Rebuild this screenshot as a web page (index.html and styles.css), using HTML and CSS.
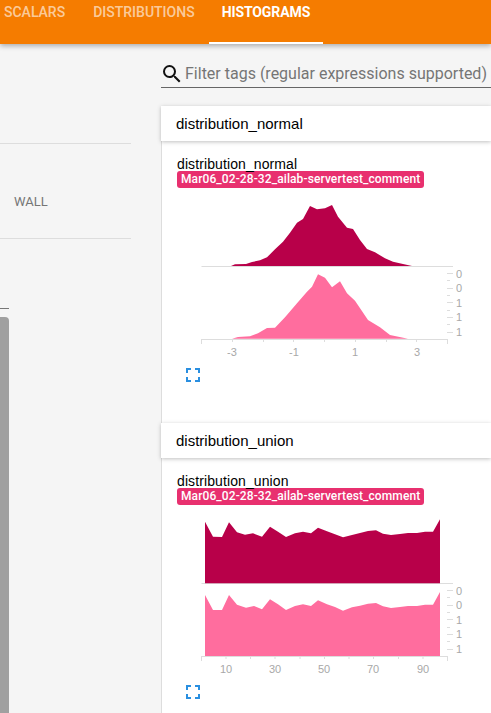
FILE: index.html
```html
<!DOCTYPE html>
<html lang="en">
<head>
  <meta charset="UTF-8" />
  <title>TensorBoard</title>
  <link rel="stylesheet" href="styles.css">
</head>
<body>
<header class="topbar">
  <a class="tab">SCALARS</a>
  <a class="tab">DISTRIBUTIONS</a>
  <a class="tab active">HISTOGRAMS</a>
</header>

<div class="layout">
  <aside class="sidebar">
    <div class="xtype">WALL</div>
    <div class="runs-rule"></div>
    <div class="runs-thumb"></div>
  </aside>

  <main class="content">
    <div class="search">
      <svg class="search-icon" viewBox="0 0 24 24">
        <path d="M15.5 14h-.79l-.28-.27A6.47 6.47 0 0 0 16 9.5 6.5 6.5 0 1 0 9.5 16c1.61 0 3.09-.59 4.23-1.57l.27.28v.79l5 4.99L20.49 19l-4.99-5zm-6 0C7.01 14 5 11.99 5 9.5S7.01 5 9.5 5 14 7.01 14 9.5 11.99 14 9.5 14z"/>
      </svg>
      <span class="search-text">Filter tags (regular expressions supported)</span>
    </div>

    <section class="pane">
      <h2 class="pane-title">distribution_normal</h2>
      <div class="card">
        <div class="card-name">distribution_normal</div>
        <span class="run-tag">Mar06_02-28-32_ailab-servertest_comment</span>
        <svg class="chart" viewBox="190 195 300 170">
          <g class="baseline">
            <path d="M201.5 266.5H453"/>
            <path d="M201.5 339.5H447.5V342"/>
          </g>
          <polygon class="area-dark" points="231,266 235,264.3 246,264 252,262 260,260.3 267,257.3 275,249.3 283,241.7 290,232.7 297,222.7 303,219 310,206 317,209.3 325,208.3 332,205 338,216.7 347,227.7 353,229 360,240 367,249 375,252.3 385,258.3 393,261.7 403,264 412,266"/>
          <polygon class="area-light" points="232,338.7 238,337 250,336.3 258,333.3 267,328 275,327.7 285,317.3 297,303.3 307,291.7 312,286.7 318,274.3 325,277.7 332,287.3 340,281.3 347,293.3 355,300.7 368,320 380,327.3 390,335 408,338.7"/>
          <path class="ticks" d="M201.5 339v5M232.5 339v3M263.5 339v3M293.5 339v3M324.5 339v3M355.5 339v3M386.5 339v3M416.5 339v3M447.5 339v5M447 266.5h6M447 273.5h6M447 280.5h3M447 288.5h6M447 295.5h3M447 302.5h6M447 310.5h3M447 317.5h6M447 324.5h3M447 332.5h6"/>
          <g class="axis-y">
            <text x="456" y="278">0</text>
            <text x="456" y="292">0</text>
            <text x="456" y="307">1</text>
            <text x="456" y="321">1</text>
            <text x="456" y="336">1</text>
          </g>
          <g class="axis-x">
            <text x="232" y="356">-3</text>
            <text x="294" y="356">-1</text>
            <text x="355" y="356">1</text>
            <text x="417" y="356">3</text>
          </g>
        </svg>
        <svg class="expand" viewBox="0 0 14 14">
          <path d="M1 5V1h4M9 1h4v4M13 9v4H9M5 13H1V9"/>
        </svg>
      </div>
    </section>

    <section class="pane">
      <h2 class="pane-title">distribution_union</h2>
      <div class="card">
        <div class="card-name">distribution_union</div>
        <span class="run-tag">Mar06_02-28-32_ailab-servertest_comment</span>
        <svg class="chart" viewBox="190 512 300 170">
          <g class="baseline">
            <path d="M201.5 583.5H453"/>
            <path d="M201.5 656.5H447.5V659"/>
          </g>
          <polygon class="area-dark" points="205,583.3 205,521.7 213,536.7 222,537 229,522.3 237,532.3 245,534.7 253,533.3 262,536.7 270,526.7 278,531.7 286,537 295,533.3 303,531.7 311,533.3 318,527.7 327,531.3 335,534.3 343,537.3 352,535 360,533 368,531 376,530.3 383,533.7 391,535 400,534 408,533 417,533 425,531.7 433,531.7 440,519.3 440,583.3"/>
          <polygon class="area-light" points="205,656 205,595 213,610 222,610 229,595 237,604.7 246,607.7 254,606 262,609.3 270,599.3 278,604.3 286,610 295,606 303,604.3 311,606 318,600.3 327,604.3 335,607 343,610.7 352,607.3 360,605.7 368,603.7 376,603 383,606.3 391,608 400,607 408,606 417,606 425,604.7 433,604.7 440,592 440,656"/>
          <path class="ticks" d="M201.5 656v5M226 656v3M250.5 656v3M275 656v3M300 656v3M324.5 656v3M349 656v3M373.5 656v3M398.5 656v3M423 656v3M447.5 656v5M447 583.5h6M447 590.5h6M447 597.5h3M447 605.5h6M447 612.5h3M447 619.5h6M447 627.5h3M447 634.5h6M447 641.5h3M447 649.5h6"/>
          <g class="axis-y">
            <text x="456" y="595">0</text>
            <text x="456" y="609">0</text>
            <text x="456" y="624">1</text>
            <text x="456" y="638">1</text>
            <text x="456" y="653">1</text>
          </g>
          <g class="axis-x">
            <text x="226" y="673">10</text>
            <text x="275" y="673">30</text>
            <text x="324" y="673">50</text>
            <text x="373" y="673">70</text>
            <text x="423" y="673">90</text>
          </g>
        </svg>
        <svg class="expand" viewBox="0 0 14 14">
          <path d="M1 5V1h4M9 1h4v4M13 9v4H9M5 13H1V9"/>
        </svg>
      </div>
    </section>
  </main>
</div>
</body>
</html>
```

FILE: styles.css
```css
* {
  box-sizing: border-box;
}
html, body {
  height: 100%;
}
body {
  margin: 0;
  height: 713px;
  overflow: hidden;
  background: #f5f5f5;
  color: #000;
  font-family: Roboto, sans-serif;
  display: flex;
  flex-direction: column;
}

/* top bar */
.topbar {
  flex: none;
  height: 44px;
  background: #f57c00;
  box-shadow: 0 2px 5px rgba(0, 0, 0, 0.3);
  display: flex;
  gap: 2px;
  position: relative;
  z-index: 1;
}
.tab {
  padding: 4px 13px 0;
  font-size: 14px;
  font-weight: 500;
  line-height: 16px;
  color: rgba(255, 255, 255, 0.62);
  border-bottom: 2px solid transparent;
}
.tab:first-child {
  margin-left: -9px;
}
.tab.active {
  margin-left: -1px;
  letter-spacing: -0.1px;
  color: #fff;
  font-weight: 700;
  border-bottom-color: #fff;
}

.layout {
  flex: 1;
  display: flex;
  min-height: 0;
}

/* left side */
.sidebar {
  flex: none;
  width: 161px;
}
.xtype {
  width: 131px;
  margin-top: 99px;
  height: 96px;
  padding-left: 14px;
  border-top: 1px solid #ddd;
  border-bottom: 1px solid #ddd;
  font-size: 13px;
  line-height: 116px;
  color: #757575;
}
.runs-rule {
  width: 9px;
  margin-top: 69px;
  border-top: 1px solid #777;
}
.runs-thumb {
  width: 9px;
  height: 420px;
  margin-top: 8px;
  background: #a0a0a0;
  border-radius: 0 4px 0 0;
}

/* right side */
.content {
  flex: 1;
  min-width: 0;
}
.search {
  height: 44px;
  padding: 18px 0 0 0;
  display: flex;
  align-items: flex-start;
  gap: 1px;
  border-bottom: 1px solid #666;
}
.search-icon {
  flex: none;
  width: 24px;
  height: 24px;
  margin-left: -1px;
  fill: #111;
}
.search-text {
  margin-top: 2px;
  font-size: 16px;
  line-height: 19px;
  color: #757575;
  white-space: nowrap;
}

.pane {
  background: #fff;
}
.content > .pane:first-of-type {
  margin-top: 18px;
}
.pane-title {
  margin: 0;
  height: 35px;
  padding-left: 15px;
  background: #fff;
  box-shadow: 0 1px 4px rgba(0, 0, 0, 0.25);
  font-family: "Liberation Sans", Arial, sans-serif;
  font-size: 15px;
  font-weight: 400;
  line-height: 35px;
  position: relative;
}
.card {
  height: 282px;
  padding: 16px 0 0 15px;
  border-left: 1px solid #ddd;
  background: #fff;
}
/* the underscore sits on the top edge of the run tag */
.card-name {
  position: relative;
  z-index: 1;
  font-family: "Liberation Sans", Arial, sans-serif;
  font-size: 14px;
  letter-spacing: 0.1px;
  line-height: 14px;
}
.run-tag {
  display: inline-block;
  vertical-align: top;
  height: 17px;
  padding: 0 4px;
  border-radius: 3px;
  background: #e8306f;
  color: #fff;
  font-size: 12px;
  font-weight: 500;
  letter-spacing: 0.1px;
  line-height: 16px;
  white-space: nowrap;
}
.chart {
  display: block;
  width: 300px;
  height: 170px;
  margin: 5px 0 0 13px;
}
.expand {
  display: block;
  width: 14px;
  height: 14px;
  margin: 3px 0 0 9px;
  fill: none;
  stroke: #2a8fe0;
  stroke-width: 2;
}

/* charts */
.area-dark {
  fill: #b80049;
}
.area-light {
  fill: #ff6d9e;
}
.baseline path, .ticks {
  fill: none;
  stroke: #ddd;
  stroke-width: 1;
}
.axis-x, .axis-y {
  opacity: 0.85;
}
.axis-x text, .axis-y text {
  fill: #999;
  font-family: "Liberation Sans", Arial, sans-serif;
  font-size: 11px;
}
.axis-x text {
  text-anchor: middle;
}
```
